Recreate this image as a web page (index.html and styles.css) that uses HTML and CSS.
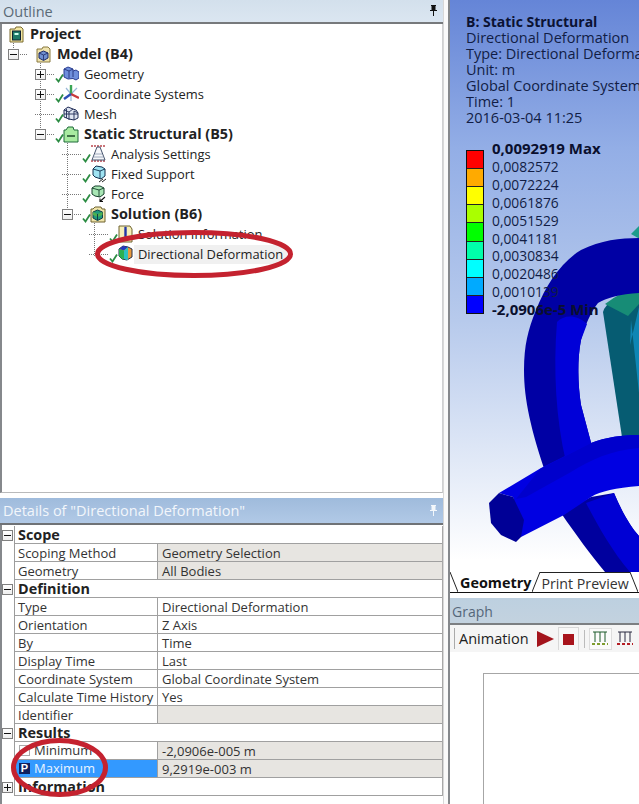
FILE: index.html
```html
<!DOCTYPE html>
<html lang="en">
<head>
<meta charset="utf-8">
<title>Directional Deformation</title>
<link rel="stylesheet" href="styles.css">
</head>
<body>
<svg class="defs" width="0" height="0" aria-hidden="true">
  <defs>
    <symbol id="chk" viewBox="0 0 24 18"><path d="M1 13.500l2.500 3L8 9.500" fill="none" stroke="#2c8c43" stroke-width="1.800"/></symbol>
    <symbol id="project" viewBox="0 0 24 18"><path d="M9 4h5l1-2h5l2 2v13H9z" fill="#f3e7a2" stroke="#7a6a30"/><rect x="11.500" y="6" width="8" height="9" fill="#1f7a68" stroke="#123"/><rect x="13.500" y="8" width="4" height="2" fill="#cfe"/></symbol>
    <symbol id="model" viewBox="0 0 24 18"><path d="M9 4h5l1-2h5l2 2v13H9z" fill="#efe3ae" stroke="#8a7a40"/><path d="M15.500 6l4.500 2v5l-4.500 2.500-4.500-2.500V8z" fill="#6f8fd0" stroke="#1e2b66"/><path d="M11 8l4.500 2 4.500-2M15.500 10v5" fill="none" stroke="#1e2b66" stroke-width=".8"/></symbol>
    <symbol id="geometry" viewBox="0 0 24 18"><path d="M9 4l4-2 5 2v2l3-1 3 2v6l-3 2-3-1.500L13 14 9 12z" fill="#6f8fdc" stroke="#2a3d92"/><path d="M9 4l5 2v7M14 6l4-2M18 6v6" fill="none" stroke="#24337c" stroke-width=".9"/></symbol>
    <symbol id="coord" viewBox="0 0 24 18"><path d="M11 3l5 6M22 3l-6 6M16 9v7" stroke="#9ab8d8" stroke-width="1.200"/><path d="M16 9V0" stroke="#3aa655" stroke-width="2.400"/><path d="M16 9l8 4" stroke="#c83a3a" stroke-width="2.400"/><path d="M16 9l-7 5" stroke="#2d4fb5" stroke-width="2.400"/></symbol>
    <symbol id="mesh" viewBox="0 0 24 18"><path d="M9 5l4-3 5 2 3 1 2 3v5l-4 2-5-1-5-2z" fill="#dfe5f2" stroke="#1f2b55"/><path d="M9 5l5 2 4-3M14 7v8M19 6v9M9 9l14 0M11.500 4l0 9M23 8l-4-2" fill="none" stroke="#1f2b55" stroke-width=".9"/></symbol>
    <symbol id="static" viewBox="0 0 24 18"><path d="M9 5h2l2-3h5l1 3h4v12H9z" fill="#a8eba0" stroke="#1e6a3a"/><path d="M12 11h8" stroke="#123d20" stroke-width="1.400"/></symbol>
    <symbol id="analysis" viewBox="0 0 24 18"><path d="M9 1h15M9 16h15" stroke="#b9474f" stroke-width="1.300" stroke-dasharray="2 1"/><path d="M10 15L15 2h3l5 13z" fill="#f6f7fa" stroke="#47556e"/><path d="M13 9h7M11.500 12h10" stroke="#8a97ad" stroke-width=".8"/></symbol>
    <symbol id="fixed" viewBox="0 0 24 18"><path d="M14 1l6 1 3 2v7l-4 3-6-2-2-2V4z" fill="#9fe3f2" stroke="#12314f"/><path d="M11 4l7 2 5-2M18 6v8" fill="none" stroke="#12314f" stroke-width=".9"/><path d="M17 17l4-3M20 17l4-3" stroke="#222" stroke-width="1"/></symbol>
    <symbol id="force" viewBox="0 0 24 18"><path d="M13 1l5 0 4 2v6l-4 3-5-1-3-2V3z" fill="#a8e6b4" stroke="#17402c"/><path d="M10 3l7 2 5-2M17 5v7" fill="none" stroke="#17402c" stroke-width=".9"/><path d="M23 12l-5 4.500M18 13.500v3h3" fill="none" stroke="#111" stroke-width="1.100"/></symbol>
    <symbol id="solution" viewBox="0 0 24 18"><path d="M9 4h2l2-2h6l1 2h3v13H9z" fill="#efe3a8" stroke="#6e6330"/><path d="M15.500 5l5 2v6l-5 2.500-4.500-2.500V7z" fill="#1e9a7c" stroke="#0f3d4a"/><path d="M11 7l4.500 2 5-2v3l-5 2-4.500-2z" fill="#4fb04f"/><path d="M15.500 9v6" stroke="#0f3d4a"/></symbol>
    <symbol id="info" viewBox="0 0 24 18"><path d="M10 1h11l2 3v13H10z" fill="#f6efb8" stroke="#6e6330"/><path d="M16.500 4v8" stroke="#2236a8" stroke-width="2.400"/><circle cx="16.500" cy="3" r="1.300" fill="#2236a8"/></symbol>
    <symbol id="deform" viewBox="0 0 24 18"><path d="M14 1l5 1 4 2v8l-5 3-5-1-3-3V4z" fill="#e89a3c" stroke="#27304a"/><path d="M10 4l4-3 5 1-4 3.500z" fill="#2338c0"/><path d="M10 4l5 1.500V14l-2 0-3-3z" fill="#2bb04f"/><path d="M15 5.500l4-3.500v13h-1l-3-1z" fill="#2dc0c0"/></symbol>
    <symbol id="pin" viewBox="0 0 9 11"><path d="M2 0h5v1H6.500v4H8v1H5v5H4V6H1V5h1.500V1H2z" fill="currentColor"/></symbol>
  </defs>
</svg>

<div class="app">
  <section class="left">
    <header class="title title-outline"><span>Outline</span><svg class="pin"><use href="#pin"/></svg></header>

    <div class="tree">
      <svg class="guides" aria-hidden="true">
        <path d="M13.500 17v9M40.500 37v73M67.500 117v73M94.500 197v35"/>
      </svg>
      <div class="row d0"><span class="twig none"></span><svg class="ico"><use href="#project"/></svg><b>Project</b></div>
      <div class="row d1"><span class="twig"><i class="box minus"></i></span><svg class="ico"><use href="#model"/></svg><b>Model (B4)</b></div>
      <div class="row d2"><span class="twig"><i class="box plus"></i></span><svg class="ico"><use href="#geometry"/><use href="#chk"/></svg><span>Geometry</span></div>
      <div class="row d2"><span class="twig"><i class="box plus"></i></span><svg class="ico"><use href="#coord"/><use href="#chk"/></svg><span>Coordinate Systems</span></div>
      <div class="row d2"><span class="twig"></span><svg class="ico"><use href="#mesh"/><use href="#chk"/></svg><span>Mesh</span></div>
      <div class="row d2"><span class="twig"><i class="box minus"></i></span><svg class="ico"><use href="#static"/><use href="#chk"/></svg><b>Static Structural (B5)</b></div>
      <div class="row d3"><span class="twig"></span><svg class="ico"><use href="#analysis"/><use href="#chk"/></svg><span>Analysis Settings</span></div>
      <div class="row d3"><span class="twig"></span><svg class="ico"><use href="#fixed"/><use href="#chk"/></svg><span>Fixed Support</span></div>
      <div class="row d3"><span class="twig"></span><svg class="ico"><use href="#force"/><use href="#chk"/></svg><span>Force</span></div>
      <div class="row d3"><span class="twig"><i class="box minus"></i></span><svg class="ico"><use href="#solution"/><use href="#chk"/></svg><b>Solution (B6)</b></div>
      <div class="row d4"><span class="twig"></span><svg class="ico"><use href="#info"/><use href="#chk"/></svg><span>Solution Information</span></div>
      <div class="row d4"><span class="twig"></span><svg class="ico"><use href="#deform"/><use href="#chk"/></svg><span class="selected">Directional Deformation</span></div>
    </div>

    <div class="gap"></div>

    <header class="title title-details"><span>Details of "Directional Deformation"</span><svg class="pin"><use href="#pin"/></svg></header>

    <div class="details">
      <div class="grid">
        <div class="sec"><span class="gut"><i class="box minus"></i></span><b>Scope</b></div>
        <div class="prop"><span class="gut"></span><span class="k">Scoping Method</span><span class="v shade">Geometry Selection</span></div>
        <div class="prop"><span class="gut"></span><span class="k">Geometry</span><span class="v shade">All Bodies</span></div>
        <div class="sec"><span class="gut"><i class="box minus"></i></span><b>Definition</b></div>
        <div class="prop"><span class="gut"></span><span class="k">Type</span><span class="v">Directional Deformation</span></div>
        <div class="prop"><span class="gut"></span><span class="k">Orientation</span><span class="v">Z Axis</span></div>
        <div class="prop"><span class="gut"></span><span class="k">By</span><span class="v">Time</span></div>
        <div class="prop"><span class="gut"></span><span class="k">Display Time</span><span class="v">Last</span></div>
        <div class="prop"><span class="gut"></span><span class="k">Coordinate System</span><span class="v">Global Coordinate System</span></div>
        <div class="prop"><span class="gut"></span><span class="k">Calculate Time History</span><span class="v">Yes</span></div>
        <div class="prop"><span class="gut"></span><span class="k">Identifier</span><span class="v shade"></span></div>
        <div class="sec"><span class="gut"><i class="box minus"></i></span><b>Results</b></div>
        <div class="prop"><span class="gut"></span><span class="k param"><i class="tick"></i>Minimum</span><span class="v shade">-2,0906e-005 m</span></div>
        <div class="prop"><span class="gut"></span><span class="k param active"><i class="tick on">P</i>Maximum</span><span class="v shade">9,2919e-003 m</span></div>
        <div class="sec"><span class="gut"><i class="box plus"></i></span><b>Information</b></div>
      </div>
    </div>
  </section>

  <div class="split"></div>

  <section class="right">
    <div class="viewport">
      <svg class="model" viewBox="0 0 190 572" aria-hidden="true">
        <g transform="translate(-449 0)">
          <!-- teal ring behind -->
          <path d="M630 234l9-9v14z" fill="#1d9c8c"/>
          <path d="M602 312Q606 298 639 288V470H626Z" fill="#065c72"/>
          <path d="M604 304Q620 291 639 288V303L627 316Z" fill="#178c76"/>
          <path d="M629 345L639 303V402L630 320Z" fill="#0e86b4"/>
          <!-- main ring, upper arc -->
          <path d="M523 370C523 345 527 330 535 310C545 285 560 262 580 250C600 240 620 238 639 238V293C620 294 605 298 597 303C590 312 584 325 580 340C576 360 577 385 580 405L592 450L545 474C530 430 523 400 523 370Z" fill="#0000a4"/>
          <path d="M556 322C552 370 555 420 565 462L592 450L580 405C577 385 576 360 580 340L586 324C575 314 563 315 556 322Z" fill="#0000d8"/>
          <!-- main ring, lower arc -->
          <path d="M560 513L590 497L613 493C620 510 630 528 639 537V572H604C590 555 575 535 560 513Z" fill="#00009e"/>
          <path d="M585 503L613 493C620 510 630 528 639 537V572H629C610 550 595 522 585 503Z" fill="#0000d4"/>
          <!-- cut tube -->
          <path d="M498 493L540 468L590 443C605 437 622 435 639 435V486C615 488 600 491 590 497L563 515L520 537L512 497Z" fill="#0000e2"/>
          <path d="M539 469L590 443C605 437 622 435 639 435V448C610 450 590 460 570 472L525 497L515 499Z" fill="#0000cc"/>
          <path d="M488 503L498 493L512 497L523 520L520 537L515 542L500 535L490 523Z" fill="#000096"/>
        </g>
      </svg>

      <div class="info">
        <strong>B: Static Structural</strong>
        <div>Directional Deformation</div>
        <div>Type: Directional Deformation</div>
        <div>Unit: m</div>
        <div>Global Coordinate System</div>
        <div>Time: 1</div>
        <div>2016-03-04 11:25</div>
      </div>

      <div class="legend">
        <div class="scale">
          <i class="c1"></i><i class="c2"></i><i class="c3"></i><i class="c4"></i><i class="c5"></i><i class="c6"></i><i class="c7"></i><i class="c8"></i><i class="c9"></i>
        </div>
        <div class="labels">
          <strong>0,0092919 Max</strong>
          <span>0,0082572</span>
          <span>0,0072224</span>
          <span>0,0061876</span>
          <span>0,0051529</span>
          <span>0,0041181</span>
          <span>0,0030834</span>
          <span>0,0020486</span>
          <span>0,0010139</span>
          <strong>-2,0906e-5 Min</strong>
        </div>
      </div>
    </div>

    <nav class="tabs">
      <svg class="slant" viewBox="0 0 8 20"><path d="M0 0L8 20"/></svg>
      <span class="tab on">Geometry</span>
      <svg class="slant" viewBox="0 0 8 20"><path d="M0 20L8 0"/></svg>
      <span class="tab top">Print Preview</span>
      <svg class="slant" viewBox="0 0 8 20"><path d="M0 0L8 20"/></svg>
    </nav>

    <header class="title title-graph"><span>Graph</span></header>

    <div class="toolbar">
      <i class="grip"></i>
      <span class="anim">Animation</span>
      <svg class="play" viewBox="0 0 17 16"><path d="M0 0L17 8L0 16z" fill="#a3141c"/></svg>
      <span class="stop"><i></i></span>
      <i class="sep"></i>
      <span class="tool boxed"><svg viewBox="0 0 16 15"><path d="M1 1h14M3 1v10M8 1v10M13 1v10" fill="none" stroke="#1d5a2a"/><path d="M0 13h16" stroke="#7e9d2e" stroke-width="2" stroke-dasharray="3 2"/></svg></span>
      <span class="tool"><svg viewBox="0 0 16 15"><path d="M1 1h14M3 1v10M8 1v10M13 1v10" fill="none" stroke="#2a2a40"/><path d="M0 13h16" stroke="#b51e25" stroke-width="2" stroke-dasharray="3 2"/></svg></span>
    </div>

    <div class="graph"><div class="plot"></div></div>
  </section>

  <svg class="marks" viewBox="0 0 639 804" aria-hidden="true">
    <ellipse cx="194" cy="254" rx="96.500" ry="21.500"/>
    <ellipse cx="59.500" cy="767.500" rx="46" ry="27"/>
  </svg>
</div>
</body>
</html>
```

FILE: styles.css
```css
* { box-sizing: border-box; }
html, body { margin: 0; height: 100%; }
body {
  font-family: "Open Sans", "Noto Sans", sans-serif;
  font-size: 13px;
  color: #222;
  background: #fff;
  overflow: hidden;
}
b { font-size: 14.4px; }
.defs { position: absolute; }
.app {
  position: relative;
  display: flex;
  width: 639px;
  height: 804px;
  overflow: hidden;
}
.left {
  width: 444px;
  display: flex;
  flex-direction: column;
  border-right: 1px solid #d8d8d8;
  flex: none;
}
.split {
  width: 6px;
  flex: none;
  background: #fafafa;
  border-right: 2px solid #85888c;
}
.right {
  flex: 1;
  min-width: 0;
  display: flex;
  flex-direction: column;
}

/* panel titles */
.title {
  display: flex;
  align-items: center;
  justify-content: space-between;
  padding: 0 3px;
  font-size: 14.5px;
}
.title-outline {
  height: 24px;
  background: linear-gradient(#d3e0ec, #dbe6f1);
  color: #5b6a76;
  border-bottom: 2px solid #77797c;
}
.title-details {
  height: 27px;
  background: linear-gradient(#9fbbdc, #b1c9e6);
  color: #f2f6fb;
  border-bottom: 2px solid #6f7276;
}
.title-graph {
  height: 27px;
  background: linear-gradient(#bdd0e0, #c3d2df);
  color: #55677a;
  border-bottom: 2px solid #7c7f82;
  font-size: 14px;
  padding: 2px 0 0 2px;
}
.pin { width: 9px; height: 11px; margin-right: 2px; margin-top: -1px; color: #111; }
.title-details .pin { color: #f3f7fb; }

/* tree */
.tree {
  position: relative;
  height: 469px;
  border-left: 2px solid #85888c;
  border-right: 1px solid #cfd0d2;
  border-bottom: 1px solid #b9babb;
  background: #fff;
}
.guides {
  position: absolute;
  left: -2px;
  top: 0;
  width: 120px;
  height: 240px;
  fill: none;
  stroke: #777;
  stroke-dasharray: 1 1;
}
.row {
  position: relative;
  display: flex;
  align-items: center;
  height: 20px;
  white-space: nowrap;
  font-size: 12.9px;
}
.row b { margin-top: -2px; }
.d0 { padding-left: 0; }
.d1 { padding-left: 6px; }
.d2 { padding-left: 33px; }
.d3 { padding-left: 60px; }
.d4 { padding-left: 87px; }
.twig {
  position: relative;
  width: 20px;
  height: 1px;
  flex: none;
  background: repeating-linear-gradient(90deg, #777 0 1px, transparent 1px 2px);
}
.twig.none { width: 0; background: none; }
.ico { width: 24px; height: 18px; flex: none; margin-right: 5px; }
.d0 .ico { margin-left: -1px; }
.selected {
  background: #f0f0f0;
  margin-left: -4px;
  padding: 0 4px;
  line-height: 19px;
}

.box {
  position: absolute;
  left: 0;
  top: -5px;
  width: 11px;
  height: 11px;
  border: 1px solid #808080;
  background: #fff linear-gradient(#fff, #eee);
}
.box::before {
  content: "";
  position: absolute;
  left: 1px;
  right: 1px;
  top: 4px;
  height: 1px;
  background: #111;
}
.box.plus::after {
  content: "";
  position: absolute;
  top: 1px;
  bottom: 1px;
  left: 4px;
  width: 1px;
  background: #111;
}

.gap { height: 5px; flex: none; }

/* details */
.details {
  flex: 1;
  border-left: 2px solid #85888c;
  padding-top: 1px;
}
.grid {
  display: flex;
  flex-direction: column;
  width: 441px;
  border-right: 1px solid #a8a8a8;
}
.sec, .prop {
  display: flex;
  align-items: center;
  height: 18px;
}
.gut {
  position: relative;
  width: 13px;
  height: 18px;
  flex: none;
  border-right: 1px solid #9c9c9c;
}
.gut .box { left: 0; top: 4px; width: 11px; height: 11px; }
.sec b {
  flex: 1;
  height: 18px;
  line-height: 18px;
  padding-left: 3px;
  border-bottom: 1px solid #a0a0a0;
}
.k, .v {
  height: 18px;
  line-height: 19px;
  border-bottom: 1px solid #a0a0a0;
  padding-left: 3px;
  white-space: nowrap;
  color: #333;
}
.k { width: 143px; flex: none; border-right: 1px solid #a0a0a0; overflow: hidden; }
.v { flex: 1; padding-left: 4px; }
.shade { background: #e7e5e1; }
.param { display: flex; align-items: center; padding-left: 4px; }
.tick {
  width: 11px;
  height: 11px;
  margin-right: 4px;
  border: 1px solid #aaa;
  background: #fff;
  flex: none;
  font: 700 11px/9px "Liberation Sans", sans-serif;
  text-align: center;
  color: #fff;
  font-style: normal;
}
.tick.on { background: #10205f; border-color: #10205f; }
.active { background: #3399ff; color: #eaf4ff; }

/* 3D viewport */
.viewport {
  position: relative;
  height: 572px;
  flex: none;
  overflow: hidden;
  background: linear-gradient(#6585d7 0, #93aee6 26%, #b7caec 56%, #fff 98%);
  color: #111d45;
  font-size: 14.5px;
}
.model {
  position: absolute;
  left: 0;
  top: 0;
  width: 190px;
  height: 572px;
}
.info {
  position: relative;
  padding: 14px 0 0 16px;
  white-space: nowrap;
  line-height: 16px;
  width: 300px;
}
.info strong { display: block; color: #0b1233; font-size: 14px; }
.legend {
  position: relative;
  display: flex;
  padding: 14px 0 0 16px;
}
.scale {
  display: flex;
  flex-direction: column;
  width: 18px;
  height: 164px;
  margin-top: 10px;
  border: 1px solid #111;
}
.scale i { flex: 1; border-bottom: 1px solid #222; }
.scale i:last-child { border-bottom: 0; }
.c1 { background: #f00; }
.c2 { background: #ffaa00; }
.c3 { background: #ff0; }
.c4 { background: #aaff00; }
.c5 { background: #0f0; }
.c6 { background: #00ffaa; }
.c7 { background: #0ff; }
.c8 { background: #00aaff; }
.c9 { background: #00f; }
.labels {
  display: flex;
  flex-direction: column;
  margin-left: 8px;
  line-height: 17.9px;
  white-space: nowrap;
  font-size: 13.8px;
}
.labels strong { color: #0a0f2e; font-size: 15px; }

/* tabs */
.tabs {
  display: flex;
  align-items: stretch;
  height: 21px;
  background: #fff;
  border-bottom: 1px solid #111;
  font-size: 14.2px;
  flex: none;
}
.slant { width: 8px; height: 20px; flex: none; fill: none; stroke: #222; }
.tab { line-height: 21px; padding: 0 1px; white-space: nowrap; color: #333; }
.tab.on { font-weight: 700; color: #111; font-size: 14.4px; padding-left: 2px; }
.tab.top { border-top: 1px solid #222; }

/* graph */
.title-graph { margin-top: 5px; flex: none; }
.toolbar {
  display: flex;
  align-items: center;
  height: 27px;
  background: #f5f5f5;
  flex: none;
  font-size: 14.5px;
}
.grip { width: 1px; height: 21px; margin-left: 4px; background: #aaa; flex: none; }
.anim { margin-left: 4px; color: #222; }
.play { width: 17px; height: 16px; margin-left: 8px; flex: none; }
.stop {
  display: flex;
  align-items: center;
  justify-content: center;
  width: 22px;
  height: 23px;
  margin-left: 4px;
  border: 1px solid #d8d8d8;
  border-bottom: 0;
  background: #f7f7f7;
}
.stop i { width: 11px; height: 11px; background: #a8141c; }
.sep { width: 1px; height: 18px; margin: 0 4px 0 5px; background: #bbb; }
.tool { display: flex; align-items: center; justify-content: center; width: 24px; height: 22px; margin-right: 2px; }
.tool svg { width: 16px; height: 15px; }
.tool.boxed { border: 1px solid #ddd; background: #fbfbfb; }
.graph {
  flex: 1;
  background: #fff;
  padding: 21px 0 0 33px;
}
.plot {
  height: 200px;
  border-top: 1px solid #a6a6a6;
  border-left: 1px solid #a6a6a6;
}

/* annotation */
.marks {
  position: absolute;
  left: 0;
  top: 0;
  width: 639px;
  height: 804px;
  fill: none;
  stroke: #c4222f;
  stroke-width: 5;
  pointer-events: none;
}
```
